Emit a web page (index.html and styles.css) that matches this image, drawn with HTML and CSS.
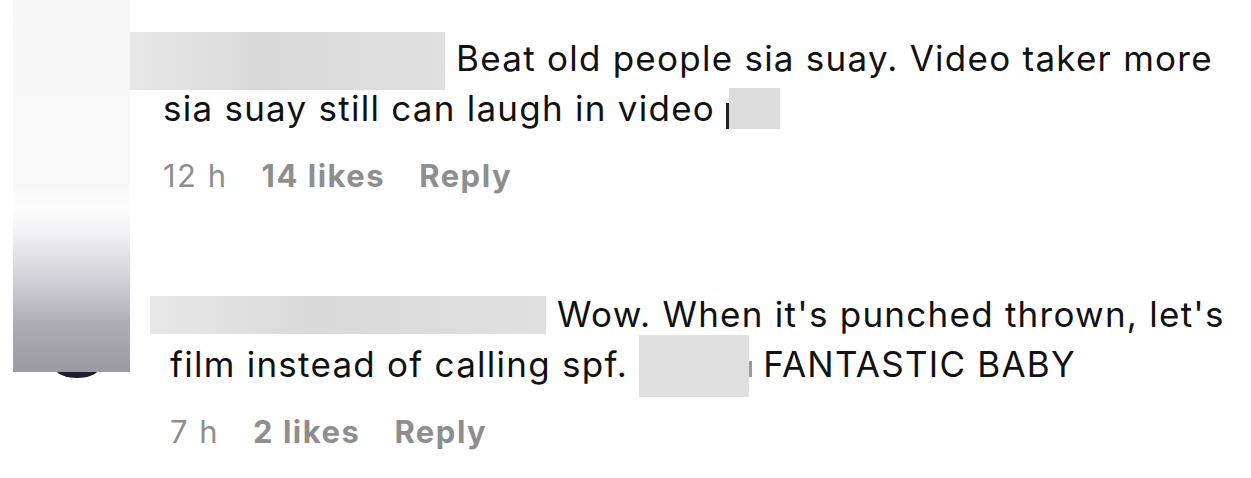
FILE: index.html
```html
<!DOCTYPE html>
<html lang="en">
<head>
    <meta charset="UTF-8">
    <meta name="viewport" content="width=device-width, initial-scale=1.0">
    <title>Comments</title>
    <link rel="stylesheet" href="styles.css">
</head>
<body>
    <div class="thread">
        <!-- redacted avatars -->
        <div class="avatar-peek"></div>
        <div class="avatar-blur"></div>

        <div class="comment first">
            <p class="comment-text"><span class="redact user-one"></span> Beat old people sia suay. Video taker more sia suay still can laugh in video <span class="glyph-bit"></span><span class="redact emoji-one"></span></p>
            <div class="meta">
                <span>12 h</span>
                <span class="strong">14 likes</span>
                <span class="strong">Reply</span>
            </div>
        </div>

        <div class="comment second">
            <p class="comment-text"><span class="redact user-two"></span> Wow. When it's punched thrown, let's film instead of calling spf. <span class="redact emoji-two"></span><span class="glyph-tail"></span> FANTASTIC BABY</p>
            <div class="meta">
                <span>7 h</span>
                <span class="strong">2 likes</span>
                <span class="strong">Reply</span>
            </div>
        </div>
    </div>
</body>
</html>
```

FILE: styles.css
```css
* {
    margin: 0;
    padding: 0;
    box-sizing: border-box;
}

body {
    background: #ffffff;
    font-family: "Inter", "Liberation Sans", sans-serif;
    color: #111111;
}

.thread {
    position: relative;
    padding-top: 33px;
}

.avatar-blur {
    position: absolute;
    left: 13px;
    top: 0;
    width: 117px;
    height: 372px;
    z-index: 2;
    background: linear-gradient(180deg, #f7f7f7 0%, #f8f8f8 50%, #fdfdfd 56%, #f0f0f2 63%, #d2d1d8 75%, #aeacb5 87%, #9b99a2 100%);
}

.avatar-peek {
    position: absolute;
    left: 55px;
    top: 358px;
    width: 44px;
    height: 20px;
    border-radius: 50%;
    background: #1c1c2e;
    filter: blur(0.6px);
    z-index: 1;
}

.comment-text {
    font-size: 35px;
    line-height: 50px;
    letter-spacing: 1.25px;
}

.first {
    padding-left: 163px;
    padding-right: 16px;
}

.second {
    padding-left: 170px;
    padding-right: 10px;
    margin-top: 93px;
}

.redact {
    display: inline-block;
    background: linear-gradient(90deg, #e8e8e8, #dadada 40%, #dcdcdc 70%, #e0e0e0);
}

.user-one {
    width: 315px;
    height: 58px;
    margin: -10px 0 -19px -33px;
}

.emoji-one {
    width: 51px;
    height: 41px;
    margin: -10px 0 -8px 0;
    background: #dcdcdc;
}

.glyph-bit {
    display: inline-block;
    width: 3px;
    height: 26px;
    margin: 0 0 -8px 0;
    background: #222;
}

.user-two {
    width: 396px;
    height: 38px;
    margin: -10px 0 -7px -20px;
}

.emoji-two {
    width: 110px;
    height: 62px;
    margin: -10px 0 -20px 0;
    background: #e0e0e0;
}

.glyph-tail {
    display: inline-block;
    width: 3px;
    height: 16px;
    background: #9a9a9a;
}

.meta {
    display: flex;
    gap: 34px;
    margin-top: 23px;
    font-size: 31px;
    line-height: 40px;
    letter-spacing: 1.5px;
    color: #8e8e8e;
}

.strong {
    font-weight: 700;
}
```
